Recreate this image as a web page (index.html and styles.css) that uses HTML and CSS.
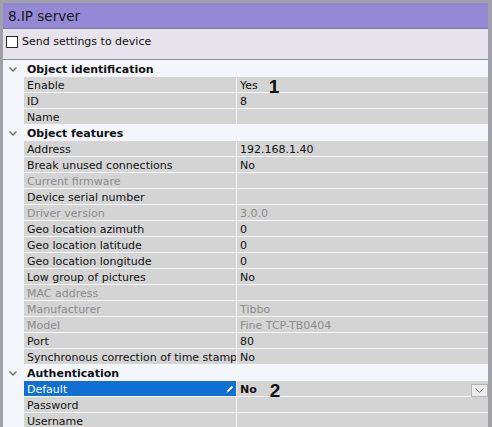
FILE: index.html
```html
<!DOCTYPE html>
<html>
<head>
<meta charset="utf-8">
<link rel="stylesheet" href="styles.css">
</head>
<body>
<div class="frame">
  <div class="title">8.IP server</div>
  <div class="toolbar">
    <span class="checkbox"></span>
    <span class="cb-label">Send settings to device</span>
  </div>
  <div class="grid">
    <div class="cat"><span class="margin"><svg class="chev" width="8" height="5" viewBox="0 0 8 5"><polyline points="0.5,0.5 4,4 7.5,0.5" fill="none" stroke="#6a6a6a" stroke-width="1.3"/></svg></span><span class="cat-label">Object identification</span></div>
    <div class="row"><span class="margin"></span><span class="name">Enable</span><span class="value">Yes<span class="mark mark1">1</span></span></div>
    <div class="row"><span class="margin"></span><span class="name">ID</span><span class="value">8</span></div>
    <div class="row"><span class="margin"></span><span class="name">Name</span><span class="value"></span></div>
    <div class="cat"><span class="margin"><svg class="chev" width="8" height="5" viewBox="0 0 8 5"><polyline points="0.5,0.5 4,4 7.5,0.5" fill="none" stroke="#6a6a6a" stroke-width="1.3"/></svg></span><span class="cat-label">Object features</span></div>
    <div class="row"><span class="margin"></span><span class="name">Address</span><span class="value">192.168.1.40</span></div>
    <div class="row"><span class="margin"></span><span class="name">Break unused connections</span><span class="value">No</span></div>
    <div class="row disabled"><span class="margin"></span><span class="name">Current firmware</span><span class="value"></span></div>
    <div class="row"><span class="margin"></span><span class="name">Device serial number</span><span class="value"></span></div>
    <div class="row disabled"><span class="margin"></span><span class="name">Driver version</span><span class="value">3.0.0</span></div>
    <div class="row"><span class="margin"></span><span class="name">Geo location azimuth</span><span class="value">0</span></div>
    <div class="row"><span class="margin"></span><span class="name">Geo location latitude</span><span class="value">0</span></div>
    <div class="row"><span class="margin"></span><span class="name">Geo location longitude</span><span class="value">0</span></div>
    <div class="row"><span class="margin"></span><span class="name">Low group of pictures</span><span class="value">No</span></div>
    <div class="row disabled"><span class="margin"></span><span class="name">MAC address</span><span class="value"></span></div>
    <div class="row disabled"><span class="margin"></span><span class="name">Manufacturer</span><span class="value">Tibbo</span></div>
    <div class="row disabled"><span class="margin"></span><span class="name">Model</span><span class="value">Fine TCP-TB0404</span></div>
    <div class="row"><span class="margin"></span><span class="name">Port</span><span class="value">80</span></div>
    <div class="row"><span class="margin"></span><span class="name">Synchronous correction of time stamp</span><span class="value">No</span></div>
    <div class="cat"><span class="margin"><svg class="chev" width="8" height="5" viewBox="0 0 8 5"><polyline points="0.5,0.5 4,4 7.5,0.5" fill="none" stroke="#6a6a6a" stroke-width="1.3"/></svg></span><span class="cat-label">Authentication</span></div>
    <div class="row selected"><span class="margin"></span><span class="name"><span class="name-text">Default</span><svg class="pencil" width="8" height="8" viewBox="0 0 8 8"><path d="M0.6 7.4 L1.2 5.4 L5.8 0.8 L7.2 2.2 L2.6 6.8 Z" fill="#ffffff"/><path d="M0.6 7.4 L1.2 5.4 L2.6 6.8 Z" fill="#9ab8e0"/></svg></span><span class="value bold">No<span class="mark mark2">2</span><span class="dropbtn"><svg width="9" height="5" viewBox="0 0 9 5"><polyline points="0.5,0.5 4.5,4.3 8.5,0.5" fill="none" stroke="#7a7a7a" stroke-width="1"/></svg></span></span></div>
    <div class="row"><span class="margin"></span><span class="name">Password</span><span class="value"></span></div>
    <div class="row"><span class="margin"></span><span class="name">Username</span><span class="value"></span></div>
  </div>
</div>
</body>
</html>
```
FILE: styles.css
```css
html, body {
  margin: 0;
  padding: 0;
}
body {
  background: #a2a1aa;
  width: 492px;
  height: 427px;
  overflow: hidden;
  font-family: "DejaVu Sans", Verdana, sans-serif;
  font-size: 11px;
  color: #111;
}
.frame {
  border-top: 3px solid #a2a1aa;
  border-left: 3px solid #a2a1aa;
  border-right: 4px solid #a2a1aa;
  height: 424px;
  overflow: hidden;
  background: #f4f6fc;
}
.title {
  height: 25px;
  background: #9589d5;
  border-bottom: 1px solid #7e7a9c;
  font-size: 13.5px;
  line-height: 26px;
  padding-left: 5px;
  color: #161616;
}
.toolbar {
  height: 30px;
  background: #e6e3eb;
  border-bottom: 1px solid #8f8e98;
  display: flex;
  align-items: flex-start;
  padding-left: 3px;
}
.checkbox {
  width: 10px;
  height: 10px;
  border: 1px solid #2a2a2a;
  background: #ffffff;
  margin-top: 7px;
  flex: none;
}
.cb-label {
  margin-left: 4px;
  margin-top: 6px;
  line-height: 14px;
}
.grid {
  padding-top: 1px;
  background: #f4f6fc;
}
.cat, .row {
  display: flex;
  height: 16px;
}
.margin {
  width: 21px;
  flex: none;
  display: flex;
  align-items: center;
  justify-content: flex-start;
  background: #f4f6fc;
}
.chev {
  margin-left: 6px;
  margin-top: 1px;
}
.cat-label {
  font-weight: bold;
  padding-left: 3px;
  padding-top: 1px;
  line-height: 15px;
}
.name {
  width: 209px;
  flex: none;
  padding-left: 3px;
  padding-top: 2px;
  height: 13px;
  line-height: 13px;
  background: #d4d4d4;
  border-bottom: 1px solid #f7f8fc;
  border-right: 1px solid #f7f8fc;
  white-space: nowrap;
  overflow: hidden;
  display: flex;
  align-items: center;
}
.name-text {
  flex: 1;
}
.value {
  flex: 1;
  padding-left: 3px;
  padding-top: 2px;
  height: 13px;
  line-height: 13px;
  background: #d4d4d4;
  border-bottom: 1px solid #f7f8fc;
  white-space: nowrap;
  display: flex;
  align-items: center;
}
.disabled .name, .disabled .value {
  color: #8c8c8c;
}
.selected .name {
  background: #0f6fd2;
  color: #ffffff;
}
.pencil {
  margin-right: 2px;
  margin-top: -2px;
  flex: none;
}
.bold {
  font-weight: bold;
}
.mark {
  font-family: "Liberation Sans", Arial, sans-serif;
  font-weight: bold;
  font-size: 19px;
  line-height: 13px;
  color: #111;
  position: relative;
  top: 1px;
}
.mark1 {
  margin-left: 11px;
}
.mark2 {
  margin-left: 13px;
}
.dropbtn {
  margin-left: auto;
  margin-right: 0;
  width: 15px;
  height: 11px;
  border: 1px solid #b4b4b8;
  background: #ececec;
  display: flex;
  align-items: center;
  justify-content: center;
  position: relative;
  top: 1px;
}
```
